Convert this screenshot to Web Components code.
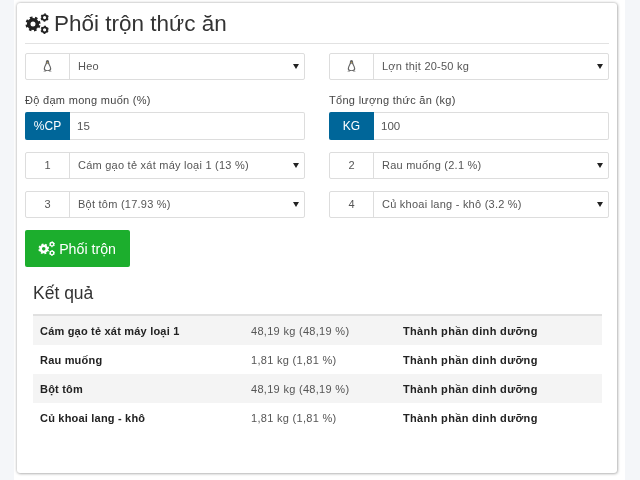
<!DOCTYPE html>
<html lang="vi">
<head>
<meta charset="utf-8">
<title>Phối trộn thức ăn</title>
<style>
    html, body { margin: 0; height: 480px; overflow: hidden; }
    body { background: #f4f6f9; font: 12px "Liberation Sans", Arial, sans-serif; color: #555; }
</style>
</head>
<body>
<feed-page>
    <h-title>Phối trộn thức ăn</h-title>
    <form-grid>
        <select-row><tux-icon slot="badge"></tux-icon>Heo</select-row>
        <select-row><tux-icon slot="badge"></tux-icon>Lợn thịt 20-50 kg</select-row>
        <unit-field label="Độ đạm mong muốn (%)" unit="%CP" value="15"></unit-field>
        <unit-field label="Tổng lượng thức ăn (kg)" unit="KG" value="100"></unit-field>
        <select-row><span slot="badge">1</span>Cám gạo tẻ xát máy loại 1 (13 %)</select-row>
        <select-row><span slot="badge">2</span>Rau muống (2.1 %)</select-row>
        <select-row><span slot="badge">3</span>Bột tôm (17.93 %)</select-row>
        <select-row><span slot="badge">4</span>Củ khoai lang - khô (3.2 %)</select-row>
    </form-grid>
    <mix-button>Phối trộn</mix-button>
    <result-table heading="Kết quả">
        <result-row name="Cám gạo tẻ xát máy loại 1" amount="48,19 kg (48,19 %)"></result-row>
        <result-row name="Rau muống" amount="1,81 kg (1,81 %)"></result-row>
        <result-row name="Bột tôm" amount="48,19 kg (48,19 %)"></result-row>
        <result-row name="Củ khoai lang - khô" amount="1,81 kg (1,81 %)"></result-row>
    </result-table>
</feed-page>

<script>
    // small helper so every element below stays a few lines long
    function define(name, css, html) {
        customElements.define(name, class extends HTMLElement {
            constructor() {
                super();
                const shadow = this.attachShadow({ mode: 'open' });
                const template = document.createElement('template');
                template.innerHTML = `<style>${css}</style>${typeof html === 'function' ? html(this) : html}`;
                shadow.appendChild(template.content.cloneNode(true));
            }
        });
    }

    // gear drawn as a ring plus a dashed thick circle for the teeth
    const gear = (cx, cy, r, tooth, width) => {
        const outer = r + width * 0.55;
        const dash = 2 * Math.PI * outer / (tooth * 2);
        return `<circle cx="${cx}" cy="${cy}" r="${r}" fill="none" stroke="currentColor" stroke-width="${width}"/>
                <circle cx="${cx}" cy="${cy}" r="${outer}" fill="none" stroke="currentColor" stroke-width="${width * 0.7}"
                    stroke-dasharray="${dash} ${dash}" transform="rotate(${180 / tooth / 2} ${cx} ${cy})"/>`;
    };

    define('gears-icon', `
        :host { display: inline-block; width: 1.143em; height: 1em; line-height: 0; }
        svg { width: 100%; height: 100%; display: block; }
    `, `<svg viewBox="0 0 24 21">
            ${gear(8, 11, 4.3, 8, 3.6)}
            ${gear(19.6, 4.6, 2.5, 6, 1.8)}
            ${gear(19.6, 16.8, 2.5, 6, 1.8)}
        </svg>`);

    define('tux-icon', `
        :host { display: block; width: 11px; height: 14px; }
        svg { width: 100%; height: 100%; display: block; }
    `, `<svg viewBox="0 0 11 14">
            <path d="M5.5 1C4.2 1 3.9 2 3.9 3.2C3.9 4.8 2.2 7 1.8 9.2C1.6 10.6 2.2 11.6 3 12H8C8.8 11.6 9.4 10.6 9.2 9.2C8.8 7 7.1 4.8 7.1 3.2C7.1 2 6.8 1 5.5 1Z" fill="#666"/>
            <path d="M5.5 4.4C4.6 4.4 4.5 5.4 4 6.4C3.4 7.6 2.9 8.6 3 9.8C3.1 10.7 3.8 11.2 5.5 11.2C7.2 11.2 7.9 10.7 8 9.8C8.1 8.6 7.6 7.6 7 6.4C6.5 5.4 6.4 4.4 5.5 4.4Z" fill="#fff"/>
            <path d="M1.4 12.8C1.8 11.2 3 11 4 12.2L4.2 13H1.6ZM9.6 12.8C9.2 11.2 8 11 7 12.2L6.8 13H9.4Z" fill="#bbb"/>
            <path d="M4.7 3h1.6l-.8 1z" fill="#d8b24a"/>
        </svg>`);

    define('feed-page', `
        :host { display: block; width: 611px; height: 480px; margin-left: 14px; padding: 3px 0 0 3px; box-sizing: border-box; background: #fff; filter: blur(.35px); }
        .card { width: 600px; height: 470px; box-sizing: border-box; padding: 0 8px; background: #fff; border-radius: 3px;
                box-shadow: 0 0 3px rgba(0,0,0,.35), 1px 1px 3px rgba(0,0,0,.15); }
    `, `<div class="card"><slot></slot></div>`);

    define('h-title', `
        :host { display: flex; align-items: center; gap: 5px; height: 41px; box-sizing: border-box; border-bottom: 1px solid #e2e2e2;
                font-size: 22.5px; color: #333; margin-bottom: 9px; }
        gears-icon { font-size: 21px; color: #222; }
        span { padding-top: 1px; }
    `, `<gears-icon></gears-icon><span><slot></slot></span>`);

    define('form-grid', `
        :host { display: grid; grid-template-columns: 280px 280px; column-gap: 24px; row-gap: 12px; }
    `, `<slot></slot>`);

    define('select-row', `
        :host { display: flex; height: 27px; box-sizing: border-box; border: 1px solid #ddd; border-radius: 2px; background: #fff; font-size: 11px; color: #555; }
        .badge { flex: 0 0 44px; box-sizing: border-box; border-right: 1px solid #ddd; display: flex; align-items: center; justify-content: center; padding-bottom: 1px; }
        .text { flex: 1; padding: 0 0 2px 8px; display: flex; align-items: center; white-space: nowrap; letter-spacing: .24px; }
        .arrow { width: 0; height: 0; border: 3px solid transparent; border-top: 5px solid #222; border-bottom: 0; align-self: center; margin-right: 5px; }
    `, `<div class="badge"><slot name="badge"></slot></div><div class="text"><slot></slot></div><div class="arrow"></div>`);

    define('unit-field', `
        :host { display: block; }
        label { display: block; font-size: 11px; color: #444; line-height: 14px; margin: 0 0 5px; letter-spacing: .3px; padding-top: 1px; }
        .row { display: flex; height: 28px; box-sizing: border-box; border: 1px solid #ddd; border-left: 0; border-radius: 2px; background: #fff; }
        .unit { flex: 0 0 45px; background: #006699; color: #fff; font-size: 12px; display: flex; align-items: center; justify-content: center; margin: -1px 0; padding-bottom: 1px; box-sizing: border-box; border-radius: 2px 0 0 2px; }
        .value { padding: 0 0 1px 7px; display: flex; align-items: center; font-size: 11.5px; color: #555; }
    `, host => `<label>${host.getAttribute('label')}</label>
        <div class="row"><div class="unit">${host.getAttribute('unit')}</div><div class="value">${host.getAttribute('value')}</div></div>`);

    define('mix-button', `
        :host { display: inline-flex; align-items: center; gap: 4px; width: 105px; height: 37px; margin-top: 12px; padding-left: 13px;
                background: #1cae2d; color: #fff; border-radius: 2px; font-size: 14.2px; box-sizing: border-box; }
        gears-icon { font-size: 15px; }
    `, `<gears-icon></gears-icon><span><slot></slot></span>`);

    define('result-table', `
        :host { display: block; margin: 0 7px 0 8px; }
        h3 { margin: 0; font-weight: 400; font-size: 17.5px; line-height: 20px; color: #333; padding: 16px 0 11px; }
        .rows { border-top: 2px solid #e0e0e0; }
        ::slotted(result-row:nth-child(odd)) { background: #f4f4f4; }
    `, host => `<h3>${host.getAttribute('heading')}</h3><div class="rows"><slot></slot></div>`);

    define('result-row', `
        :host { display: grid; grid-template-columns: 211px 152px 1fr; height: 29px; align-items: center; padding-left: 7px; font-size: 11px; }
        b { color: #222; letter-spacing: .2px; white-space: nowrap; }
        b.part { letter-spacing: .34px; }
        span { color: #555; white-space: nowrap; letter-spacing: .3px; }
    `, host => `<b>${host.getAttribute('name')}</b><span>${host.getAttribute('amount')}</span><b class="part">Thành phần dinh dưỡng</b>`);
</script>
</body>
</html>
